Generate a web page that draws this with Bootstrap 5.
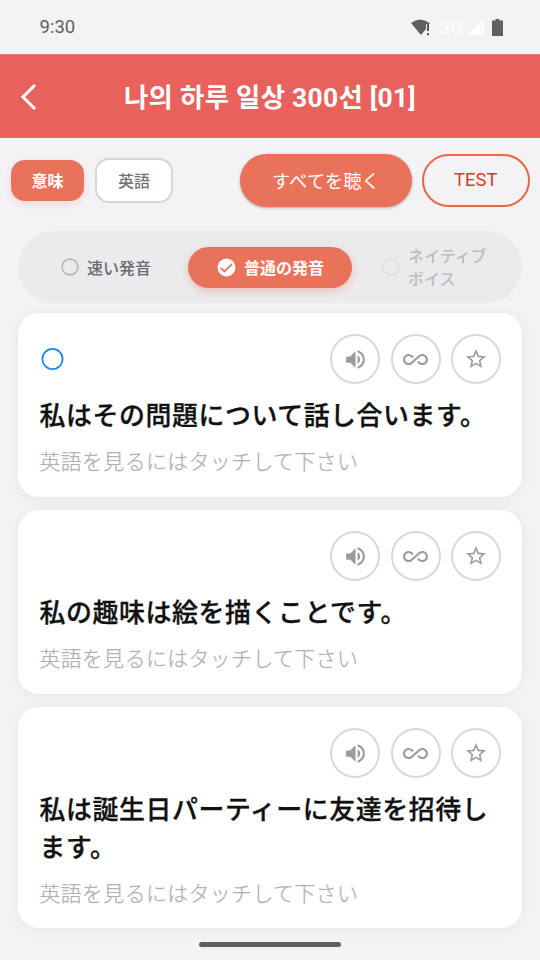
<!DOCTYPE html>
<html lang="ja">
<head>
<meta charset="utf-8">
<meta name="viewport" content="width=device-width, initial-scale=1">
<title>나의 하루 일상 300선 [01]</title>
<link href="https://cdn.jsdelivr.net/npm/bootstrap@5.3.0/dist/css/bootstrap.min.css" rel="stylesheet">
<style>
body{background:#f3f3f5;font-family:Roboto,"Noto Sans CJK JP",sans-serif;width:540px;height:960px;overflow:hidden}
svg{display:block;flex:none}
.status-bar{height:54px;padding:0 37px 0 39.500px;color:#5f5f5f;font-size:18.5px}
.status-bar .clock{padding-top:2px}
.net-label{color:#fff;font-size:19px;line-height:1;margin:0 5px 0 9px}
.title-bar{height:84px;background:#e9615d;border-top:1px solid #eb7a76;color:#fff;padding-left:20px}
.title-bar h1{font:700 26.4px/40px Roboto,"Noto Sans CJK KR",sans-serif;letter-spacing:.3px;white-space:pre;padding:2px 38px 0 0}
.tools{height:93px;padding:16px 10.500px 0 11px}
.chip{--bs-btn-padding-x:0;--bs-btn-padding-y:0;border-radius:14px;font-size:16px;font-weight:700;line-height:1}
.chip-on{width:73px;height:41px;margin-top:6px;padding-top:3px;background:#e8735a;color:#fff;border:0;box-shadow:0 3px 8px rgba(232,115,90,.2)}
.chip-off{width:78px;height:45px;margin:4px 0 0 11px;padding-top:3px;font-weight:500;background:#fff;color:#717173;border:2px solid #d5d5da}
.act{height:53px;font-size:18.4px;padding:0;line-height:1}
.act-play{width:172px;padding-top:3px;background:#e8735a;color:#fff;border:0;box-shadow:0 1px 3px rgba(0,0,0,.3)}
.act-test{width:107.500px;margin-left:10px;color:#dc3a20;border:2px solid #e76848;font-size:18.4px;font-weight:400}
.modes{margin:0 18px;height:72px;background:#ebebed;border-radius:36px;font-size:16px;font-weight:500;color:#69696d}
.modes span{padding-top:3px}
.mode-fast{width:170px;padding-left:43px}
.mode-on{width:164px;height:41px;background:#e8735a;color:#fff;font-weight:700;padding-left:29px;box-shadow:0 3px 8px rgba(232,115,90,.35)}
.mode-native{padding-left:30px;color:#bcbcbe;line-height:22.5px}
.deck{padding:10px 18px 0}
.phrase{border:0;border-radius:21px;padding:21px 21px 20px 21.500px;margin-bottom:13px;box-shadow:0 2px 14px rgba(40,40,60,.06)}
.phrase-tools{height:50px;gap:10.5px}
.round-btn{width:50px;height:50px;border:2px solid #d9d9dd;color:#9b9aa1;background:#fff;padding:0}
.sentence{margin:12.500px 0 12px;font-size:25.9px;letter-spacing:.6px;line-height:38px;font-weight:500;color:#111;-webkit-text-stroke:.3px #111}
.hint{margin:0;font-size:20.900px;letter-spacing:.4px;line-height:30.500px;font-weight:300;color:#b0b0b0;-webkit-text-stroke:.25px #b0b0b0}
.home-bar{width:142px;height:5px;background:#606060;border-radius:3px;margin:0 auto}
.deck .phrase:last-child{height:221px;margin-bottom:14px}
</style>
</head>
<body>
<svg width="0" height="0" class="position-absolute">
<defs>
<symbol id="speaker" viewBox="0 0 24 24"><path fill="currentColor" d="M3 9v6h4l5 5V4L7 9H3zm13.500 3A4.500 4.500 0 0 0 14 7.970v8.050c1.480-.73 2.500-2.250 2.500-4.020zM14 3.230v2.060c2.890.86 5 3.540 5 6.710s-2.110 5.850-5 6.710v2.060c4.010-.91 7-4.490 7-8.770s-2.990-7.860-7-8.770z"/></symbol>
<symbol id="loop" viewBox="0 0 24 24"><path fill="currentColor" d="M18.600 6.620c-1.440 0-2.800.56-3.770 1.530L7.800 14.390c-.64.64-1.490.99-2.400.99-1.870 0-3.390-1.510-3.390-3.380S3.530 8.620 5.400 8.620c.91 0 1.760.35 2.440 1.030l1.130 1 1.510-1.340L9.220 8.200A5.370 5.370 0 0 0 5.400 6.620C2.420 6.620 0 9.040 0 12s2.420 5.380 5.400 5.380c1.440 0 2.800-.56 3.770-1.530l7.030-6.240c.64-.64 1.490-.99 2.400-.99 1.870 0 3.390 1.510 3.390 3.380s-1.520 3.380-3.390 3.380c-.9 0-1.760-.35-2.440-1.030l-1.140-1.010-1.510 1.340 1.270 1.120a5.386 5.386 0 0 0 3.820 1.570c2.980 0 5.400-2.410 5.400-5.380s-2.420-5.370-5.400-5.370z"/></symbol>
<symbol id="star" viewBox="0 0 24 24"><path fill="currentColor" d="m22 9.240-7.190-.62L12 2 9.190 8.630 2 9.240l5.460 4.730L5.820 21 12 17.270 18.180 21l-1.630-7.030L22 9.240zM12 15.400l-3.760 2.270 1-4.280-3.320-2.880 4.380-.38L12 6.100l1.710 4.040 4.380.38-3.320 2.880 1 4.280L12 15.400z"/></symbol>
</defs>
</svg>

<header>
<div class="status-bar d-flex align-items-center">
<span class="clock me-auto">9:30</span>
<svg width="19" height="17" viewBox="0 0 19 17"><path d="M0 4Q9-3.200 18.500 4v1h-3.500v5L10 16z" fill="#616161"/><path d="M17 5v7M17 14v2.200" stroke="#222" stroke-width="1.500"/></svg>
<span class="net-label">3G</span>
<svg width="16" height="16" viewBox="0 0 16 16"><path d="M0 16 16 0v16z" fill="#fff"/><path d="M13 6v9" stroke="#f3f3f5" stroke-width="1.500"/></svg>
<svg width="11" height="17" viewBox="0 0 11 17" class="ms-2"><path d="M3.500 0h4v1.500H11V17H0V1.500h3.500z" fill="#616161"/></svg>
</div>
<nav class="title-bar d-flex align-items-center">
<svg width="18" height="28" viewBox="0 0 18 28"><path d="M15 2 3 14 15 26" fill="none" stroke="#fff" stroke-width="3"/></svg>
<h1 class="mb-0 flex-grow-1 text-center">나의 하루 일상 300선 [01]</h1>
</nav>
</header>

<main>
<div class="tools d-flex align-items-start">
<button class="btn chip chip-on">意味</button>
<button class="btn chip chip-off">英語</button>
<button class="btn rounded-pill act act-play ms-auto">すべてを聴く</button>
<button class="btn rounded-pill act act-test">TEST</button>
</div>
<div class="modes d-flex align-items-center">
<div class="mode-fast d-flex align-items-center gap-2"><svg width="18" height="18" viewBox="0 0 18 18"><circle cx="9" cy="9" r="7.900" fill="none" stroke="#b6b6bd" stroke-width="1.600"/></svg><span>速い発音</span></div>
<div class="mode-on rounded-pill d-flex align-items-center gap-2"><svg width="19" height="19" viewBox="0 0 19 19"><circle cx="9.500" cy="9.500" r="9" fill="#fff"/><path d="m4 9.800 3.500 3.500L15 5.800" fill="none" stroke="#e8735a" stroke-width="1.900"/></svg><span>普通の発音</span></div>
<div class="mode-native d-flex align-items-center"><svg width="18" height="18" viewBox="0 0 18 18" class="me-2"><circle cx="9" cy="9" r="7.900" fill="none" stroke="#dfdfe2" stroke-width="1.600"/></svg><span>ネイティブ<br>ボイス</span></div>
</div>
<section class="deck">
<article class="card phrase">
<div class="phrase-tools d-flex align-items-center"><svg width="24" height="24" viewBox="0 0 24 24" class="me-auto"><circle cx="12.500" cy="12" r="10.100" fill="none" stroke="#118af0" stroke-width="1.700"/></svg>
<button class="btn rounded-circle round-btn d-flex align-items-center justify-content-center"><svg width="25" height="25"><use href="#speaker"/></svg></button>
<button class="btn rounded-circle round-btn d-flex align-items-center justify-content-center"><svg width="25" height="25"><use href="#loop"/></svg></button>
<button class="btn rounded-circle round-btn d-flex align-items-center justify-content-center"><svg width="24" height="24"><use href="#star"/></svg></button></div>
<p class="sentence">私はその問題について話し合います。</p>
<p class="hint">英語を見るにはタッチして下さい</p>
</article>
<article class="card phrase">
<div class="phrase-tools d-flex align-items-center justify-content-end">
<button class="btn rounded-circle round-btn d-flex align-items-center justify-content-center"><svg width="25" height="25"><use href="#speaker"/></svg></button>
<button class="btn rounded-circle round-btn d-flex align-items-center justify-content-center"><svg width="25" height="25"><use href="#loop"/></svg></button>
<button class="btn rounded-circle round-btn d-flex align-items-center justify-content-center"><svg width="24" height="24"><use href="#star"/></svg></button></div>
<p class="sentence">私の趣味は絵を描くことです。</p>
<p class="hint">英語を見るにはタッチして下さい</p>
</article>
<article class="card phrase">
<div class="phrase-tools d-flex align-items-center justify-content-end">
<button class="btn rounded-circle round-btn d-flex align-items-center justify-content-center"><svg width="25" height="25"><use href="#speaker"/></svg></button>
<button class="btn rounded-circle round-btn d-flex align-items-center justify-content-center"><svg width="25" height="25"><use href="#loop"/></svg></button>
<button class="btn rounded-circle round-btn d-flex align-items-center justify-content-center"><svg width="24" height="24"><use href="#star"/></svg></button></div>
<p class="sentence">私は誕生日パーティーに友達を招待します。</p>
<p class="hint">英語を見るにはタッチして下さい</p>
</article>
</section>
<div class="home-bar"></div>
</main>
<script src="https://cdn.jsdelivr.net/npm/bootstrap@5.3.0/dist/js/bootstrap.bundle.min.js"></script>
</body>
</html>
